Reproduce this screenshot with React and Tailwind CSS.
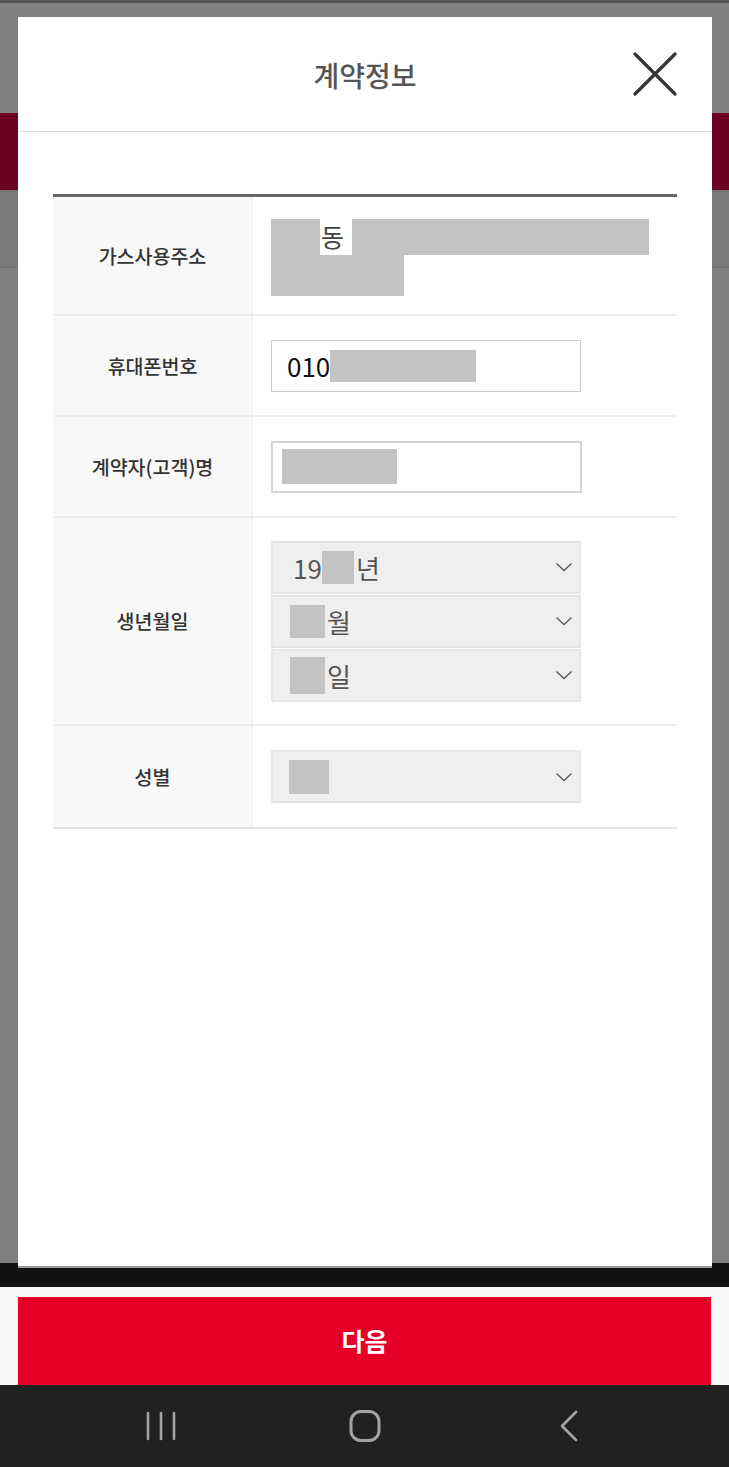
import React from "react";

const font = { fontFamily: '"Noto Sans CJK KR", "Noto Sans", Roboto, sans-serif' };

function Chevron() {
  return (
    <svg width="18" height="10" viewBox="0 0 18 10" fill="none">
      <path d="M1.5 1.5 L9 8.5 L16.5 1.5" stroke="#555" strokeWidth="1.3" />
    </svg>
  );
}

function Block({ className }) {
  return <span className={"inline-block bg-[#c3c3c3] " + className} />;
}

function Select({ children }) {
  return (
    <div className="w-[310px] h-[53px] bg-[#efefef] border-2 border-[#e6e6e6] flex items-center justify-between pl-[16px] pr-[6px]">
      <div className="flex items-center text-[26px] text-[#555]">{children}</div>
      <Chevron />
    </div>
  );
}

function Row({ label, h, last, children }) {
  return (
    <div
      className={
        "grid grid-cols-[200px_1fr] " +
        (last ? "border-b-2 border-[#e2e2e2]" : "border-b-2 border-[#eeeeee]")
      }
    >
      <div
        className={
          "bg-[#f8f8f8] border-r border-[#ececec] flex items-center justify-center text-[19.5px] font-medium text-[#333] " + h
        }
      >
        {label}
      </div>
      <div className="pl-[18px] flex items-center">{children}</div>
    </div>
  );
}

export default function App() {
  return (
    <div className="relative w-[729px] h-[1467px] overflow-hidden flex flex-col bg-[#808080]" style={font}>
      {/* page behind the dimmed overlay */}
      <div className="h-[3px] bg-[#545454]" />
      <div className="h-[110px] bg-[#808080]" />
      <div className="h-[77px] bg-[#6c0020]" />
      <div className="h-[78px] bg-[#7b7b7b] border-t-2 border-b border-[#737373]" />
      <div className="flex-1 bg-[#808080]" />
      <div className="h-[24px] bg-[#111111]" />
      <div className="h-[98px] bg-[#f7f7f7] px-[18px] pt-[10px]">
        <button className="w-full h-[88px] bg-[#e60028] text-white text-[25px] font-bold">다음</button>
      </div>
      <div className="h-[82px] bg-[#212121] flex items-center justify-center gap-[164px]">
        <div className="w-[40px] flex justify-center">
          <svg width="32" height="32" viewBox="0 0 32 32" fill="none" stroke="#a3a3a3" strokeWidth="2.6" strokeLinecap="round">
            <path d="M3 3 V29 M16 3 V29 M29 3 V29" />
          </svg>
        </div>
        <div className="w-[40px] flex justify-center">
          <svg width="32" height="32" viewBox="0 0 32 32" fill="none" stroke="#a3a3a3" strokeWidth="3">
            <rect x="2" y="1.5" width="28" height="29" rx="10" />
          </svg>
        </div>
        <div className="w-[40px] flex justify-center">
          <svg width="20" height="32" viewBox="0 0 20 32" fill="none" stroke="#a3a3a3" strokeWidth="2.8" strokeLinecap="round" strokeLinejoin="round">
            <path d="M17 2 L3 16 L17 30" />
          </svg>
        </div>
      </div>

      {/* modal */}
      <div className="absolute left-[18px] top-[17px] w-[694px] h-[1251px] bg-white border-b-2 border-[#9a9a9a]">
        <div className="relative h-[115px] border-b border-[#dddddd] flex items-center justify-center">
          <span className="text-[28px] font-medium text-[#555] mt-[2px]">계약정보</span>
          <button className="absolute right-[34px] top-[34px]">
            <svg width="46" height="46" viewBox="0 0 46 46" fill="none" stroke="#333" strokeWidth="3.2" strokeLinecap="round">
              <path d="M3 3 L43 43 M43 3 L3 43" />
            </svg>
          </button>
        </div>

        <div className="mx-[35px] mt-[62px] border-t-[3px] border-[#666]">
          <Row label="가스사용주소" h="h-[117px]">
            <div className="flex flex-col w-full pt-[4px]">
              <div className="flex items-stretch h-[36px]">
                <Block className="w-[49px] h-[36px]" />
                <span className="text-[25px] text-[#444] leading-[34px] pl-[1px] pr-[8px]">동</span>
                <Block className="w-[297px] h-[36px]" />
              </div>
              <Block className="w-[133px] h-[41px]" />
            </div>
          </Row>
          <Row label="휴대폰번호" h="h-[99px]">
            <div className="w-[310px] h-[52px] border border-[#cccccc] flex items-center pl-[15px]">
              <span className="text-[26px] text-[#111]">010</span>
              <Block className="w-[146px] h-[32px]" />
            </div>
          </Row>
          <Row label="계약자(고객)명" h="h-[99px]">
            <div className="w-[311px] h-[52px] border-2 border-[#d6d6d6] flex items-center pl-[9px]">
              <Block className="w-[115px] h-[35px]" />
            </div>
          </Row>
          <Row label="생년월일" h="h-[206px]">
            <div className="flex flex-col gap-[1px]">
              <Select>
                <span className="pl-[4px]">19</span>
                <Block className="w-[32px] h-[33px]" />
                <span className="pl-[2px]">년</span>
              </Select>
              <Select>
                <Block className="w-[35px] h-[33px] ml-[1px]" />
                <span className="pl-[2px]">월</span>
              </Select>
              <Select>
                <Block className="w-[35px] h-[37px] ml-[1px]" />
                <span className="pl-[2px]">일</span>
              </Select>
            </div>
          </Row>
          <Row label="성별" h="h-[101px]" last>
            <Select>
              <Block className="w-[40px] h-[34px]" />
            </Select>
          </Row>
        </div>
      </div>
    </div>
  );
}
